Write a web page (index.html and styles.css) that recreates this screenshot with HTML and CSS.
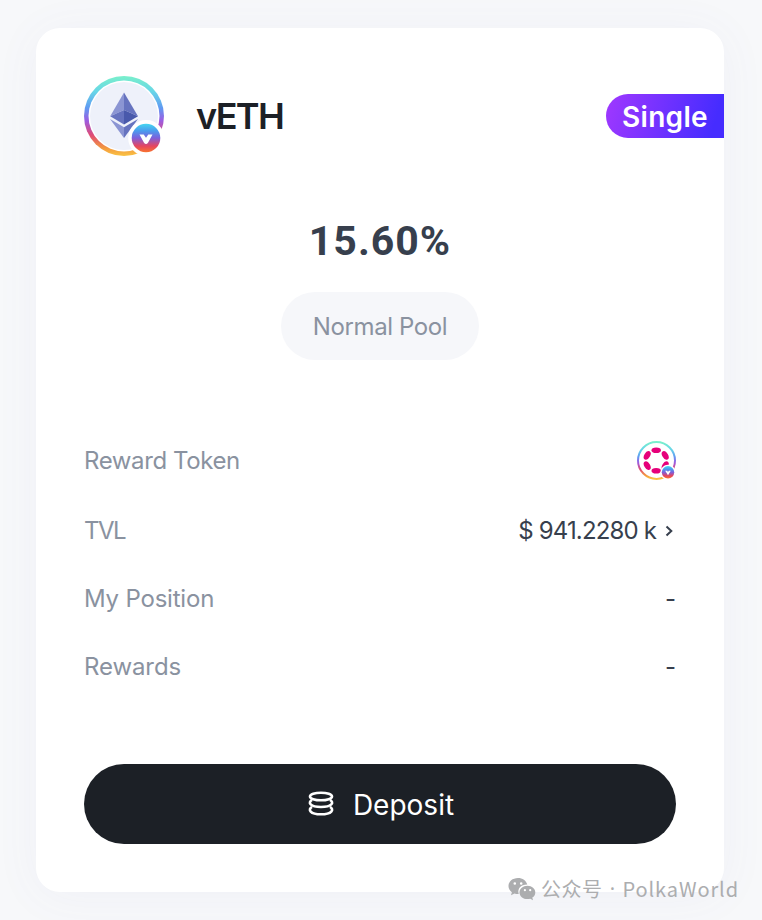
FILE: index.html
```
<!DOCTYPE html>
<html lang="en">
<head>
  <meta charset="UTF-8">
  <title>vETH Pool</title>
  <link rel="stylesheet" href="styles.css">
</head>
<body>

  <div class="card">
    <!-- Header -->
    <div class="card-header">
      <svg class="token-icon" viewBox="0 0 80 80">
        <defs>
          <linearGradient id="rainbow" x1="0" y1="0" x2="0" y2="1">
            <stop offset="0" stop-color="#7af0cb"/>
            <stop offset="0.2" stop-color="#67d5e8"/>
            <stop offset="0.4" stop-color="#609af2"/>
            <stop offset="0.56" stop-color="#9d5ce0"/>
            <stop offset="0.74" stop-color="#e04c74"/>
            <stop offset="0.9" stop-color="#f3993f"/>
            <stop offset="1" stop-color="#fac444"/>
          </linearGradient>
          <linearGradient id="badge" x1="0" y1="0" x2="0" y2="1">
            <stop offset="0" stop-color="#45d8f0"/>
            <stop offset="0.25" stop-color="#4b9bee"/>
            <stop offset="0.5" stop-color="#7d60dc"/>
            <stop offset="0.78" stop-color="#e64560"/>
            <stop offset="1" stop-color="#f8752e"/>
          </linearGradient>
        </defs>
        <circle cx="40" cy="40" r="40" fill="url(#rainbow)"/>
        <circle cx="40" cy="40" r="35.5" fill="#fff"/>
        <circle cx="40" cy="40" r="34" fill="#eef1fa"/>
        <path d="M40 16.500L26.200 40.200L40 34z" fill="#8b95d3"/>
        <path d="M40 16.500L54 40.200L40 34z" fill="#6673bf"/>
        <path d="M26.200 40.200L40 34V48.500z" fill="#6673bf"/>
        <path d="M54 40.200L40 34V48.500z" fill="#4959ab"/>
        <path d="M26 43L40 51.300V62z" fill="#8b95d3"/>
        <path d="M54 43L40 51.300V62z" fill="#6673bf"/>
        <circle cx="62.200" cy="62" r="18" fill="#fff"/>
        <circle cx="62" cy="62" r="14.300" fill="url(#badge)"/>
        <path d="M55.500 58.500h4.200l2.300 3.200 2.300-3.200h4.200l-4.500 8.200q-2 2.600-4 0z" fill="#fff"/>
      </svg>
      <h1 class="token-name">vETH</h1>
      <span class="tag">Single</span>
    </div>

    <!-- APR -->
    <div class="apr">15.60%</div>
    <div class="pool-type"><span>Normal Pool</span></div>

    <!-- Pool info -->
    <div class="info">
      <div class="row row-token">
        <span class="label reward-token">Reward Token</span>
        <svg class="reward-icon" viewBox="0 0 40 40">
          <circle cx="20.500" cy="19.500" r="18.500" fill="#fff" stroke="url(#rainbow)" stroke-width="2"/>
          <g fill="#e6007a">
            <ellipse cx="20.200" cy="9.300" rx="4.700" ry="2.800"/>
            <ellipse cx="20.200" cy="29.700" rx="4.700" ry="2.800"/>
            <ellipse cx="11.200" cy="14.400" rx="4.700" ry="2.900" transform="rotate(-60 11.200 14.400)"/>
            <ellipse cx="29.200" cy="14.400" rx="4.700" ry="2.900" transform="rotate(60 29.200 14.400)"/>
            <ellipse cx="11.200" cy="24.600" rx="4.700" ry="2.900" transform="rotate(60 11.200 24.600)"/>
            <ellipse cx="29.200" cy="24.600" rx="4.700" ry="2.900" transform="rotate(-60 29.200 24.600)"/>
          </g>
          <circle cx="32" cy="31.300" r="7.600" fill="#fff"/>
          <circle cx="32" cy="31.300" r="6.200" fill="url(#badge)"/>
          <path d="M29.200 29.700h1.900l.9 1.400.9-1.400h1.900L32 34.200z" fill="#fff"/>
        </svg>
      </div>
      <div class="row">
        <span class="label tvl">TVL</span>
        <span class="value">
          <span class="amount">$ 941.2280 k</span>
          <svg class="chevron" viewBox="0 0 8 12"><path d="M1.500 1.500L6.300 6L1.500 10.500"/></svg>
        </span>
      </div>
      <div class="row">
        <span class="label position">My Position</span>
        <span class="value">-</span>
      </div>
      <div class="row">
        <span class="label rewards">Rewards</span>
        <span class="value">-</span>
      </div>
    </div>

    <button class="deposit">
      <svg class="coins" viewBox="0 0 26 26">
        <ellipse cx="13" cy="5.500" rx="11" ry="3.800"/>
        <path d="M4 8.800C-0.500 11.500 2 16 13 16s13.500-4.500 9-7.200"/>
        <path d="M4 15.800C-0.500 18.500 2 23.300 13 23.300s13.500-4.800 9-7.500"/>
      </svg>
      <span>Deposit</span>
    </button>
  </div>

  <div class="watermark">
    <svg class="wechat" viewBox="0 0 28 24">
      <path fill-rule="evenodd" d="M10 1C4.500 1 0.500 4.600 0.500 9c0 2.600 1.300 4.700 3.400 6.200L3 18.200l3.500-1.700c1.300.400 2.600.600 4.200.500C9.200 11.500 13 7.500 19.300 7.600C18.300 3.600 14.500 1 10 1zM6.800 5.200a1.300 1.300 0 1 1 0 2.600a1.300 1.300 0 0 1 0-2.600zM13.200 5.200a1.300 1.300 0 1 1 0 2.600a1.300 1.300 0 0 1 0-2.600z"/>
      <path fill-rule="evenodd" d="M19.500 8.700c-4.600 0-8 3-8 6.700s3.400 6.700 8 6.700c1 0 1.900-.200 2.800-.400l2.700 1.500-.700-2.600c1.900-1.300 3-3 3-5.200c0-3.700-3.400-6.700-7.800-6.700zM16.900 12.100a1.100 1.100 0 1 1 0 2.200a1.100 1.100 0 0 1 0-2.200zM22.200 12.100a1.100 1.100 0 1 1 0 2.200a1.100 1.100 0 0 1 0-2.200z"/>
    </svg>
    <span class="account">公众号</span>
    <span class="dot">·</span>
    <span class="author">PolkaWorld</span>
  </div>

</body>
</html>
```
FILE: styles.css
```
body {
  margin: 0;
  padding: 28px 38px 28px 36px;
  height: 920px;
  box-sizing: border-box;
  overflow: hidden;
  position: relative;
  background: #f7f8fa;
  font-family: Inter, "Noto Sans CJK SC", sans-serif;
}

.card {
  height: 864px;
  box-sizing: border-box;
  padding: 48px;
  border-radius: 24px;
  background: white;
  box-shadow: 0 4px 48px rgba(90, 100, 170, 0.05);
  display: flex;
  flex-direction: column;
}

.card-header {
  display: flex;
  align-items: center;
  height: 80px;
  margin-right: -48px;
}

.token-icon {
  width: 80px;
  height: 80px;
}

.token-name {
  margin: 0 0 0 32px;
  font-size: 36px;
  font-weight: 600;
  line-height: 44px;
  letter-spacing: -1.6px;
  color: #1c2026;
}

.tag {
  margin-left: auto;
  width: 118px;
  height: 44px;
  box-sizing: border-box;
  padding-left: 16px;
  border-radius: 22px 0 0 22px;
  background: linear-gradient(105deg, #a038ff, #462cff 90%);
  color: white;
  font-size: 28px;
  font-weight: 600;
  line-height: 46px;
  letter-spacing: 0.3px;
}

.apr {
  margin-top: 61px;
  text-align: center;
  font-family: Roboto, sans-serif;
  font-size: 41px;
  font-weight: 700;
  line-height: 48px;
  letter-spacing: 1px;
  color: #373f4d;
}

.pool-type {
  align-self: center;
  width: 198px;
  height: 68px;
  margin-top: 27px;
  border-radius: 34px;
  background: #f6f7fa;
  text-align: center;
  font-size: 24px;
  line-height: 69px;
  letter-spacing: -0.4px;
  color: #8a92a0;
}

.info {
  margin-top: 65px;
}

.row {
  display: flex;
  justify-content: space-between;
  align-items: center;
  height: 68px;
  font-size: 24px;
}

.row-token {
  height: 71px;
}

.label {
  color: #8a92a0;
}

.reward-token {
  letter-spacing: -0.4px;
}

.tvl {
  letter-spacing: -1.5px;
}

.position {
  letter-spacing: -0.2px;
}

.rewards {
  letter-spacing: -0.1px;
}

.reward-icon {
  width: 40px;
  height: 40px;
}

.value {
  display: flex;
  align-items: center;
  color: #373f4d;
}

.amount {
  letter-spacing: -0.85px;
}

.chevron {
  width: 8px;
  height: 12px;
  margin: 2px 3px 0 9px;
  fill: none;
  stroke: #373f4d;
  stroke-width: 2;
}

.deposit {
  display: flex;
  justify-content: center;
  align-items: center;
  gap: 19px;
  height: 80px;
  margin-top: auto;
  padding: 1px 0 0 2px;
  border: none;
  border-radius: 40px;
  background: #1c2026;
  color: white;
  font-family: inherit;
  font-size: 28px;
  line-height: 36px;
}

.coins {
  width: 26px;
  height: 26px;
  margin-bottom: 2px;
  fill: none;
  stroke: white;
  stroke-width: 2.6;
}

.watermark {
  position: absolute;
  left: 508px;
  top: 875px;
  height: 28px;
  display: flex;
  align-items: center;
  color: #acadaf;
  font-family: "Noto Sans CJK SC", sans-serif;
  font-size: 20px;
  line-height: 28px;
  white-space: nowrap;
}

.wechat {
  width: 28px;
  height: 24px;
  margin-right: 5px;
  fill: #acadaf;
}

.account {
  letter-spacing: 0.5px;
}

.dot {
  width: 20px;
  text-align: center;
  font-family: "Noto Sans", sans-serif;
}

.author {
  letter-spacing: 0.9px;
}
```
